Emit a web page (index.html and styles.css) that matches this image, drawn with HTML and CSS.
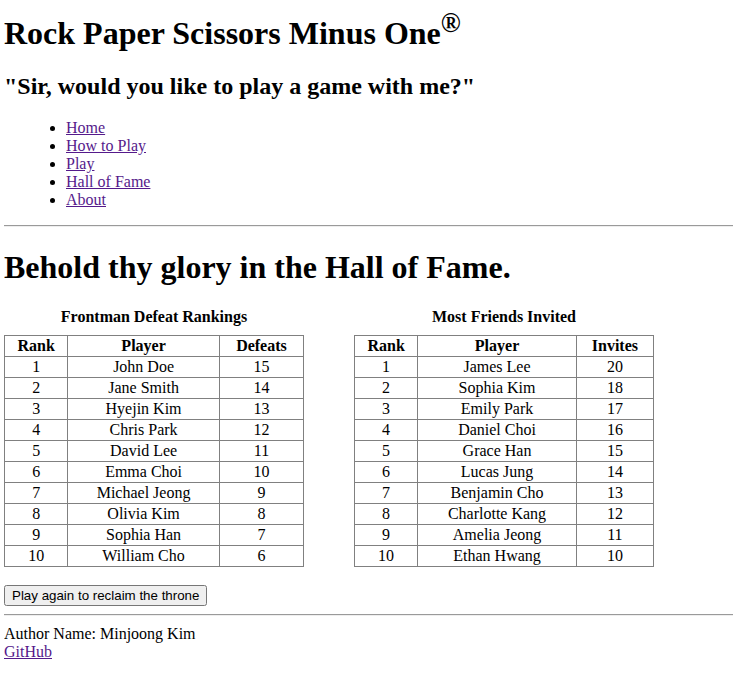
FILE: index.html
```html
<!DOCTYPE html>
<html lang="en">
<head>
<meta charset="utf-8">
<title>Hall of Fame - Rock Paper Scissors Minus One</title>
<link rel="stylesheet" href="styles.css">
</head>
<body>
<header class="site-header">
  <h1 class="site-title">Rock Paper Scissors Minus One<sup>®</sup></h1>
  <h2 class="tagline">"Sir, would you like to play a game with me?"</h2>
  <nav class="site-nav">
    <ul class="nav-list">
      <li><a href="#">Home</a></li>
      <li><a href="#">How to Play</a></li>
      <li><a href="#">Play</a></li>
      <li><a href="#">Hall of Fame</a></li>
      <li><a href="#">About</a></li>
    </ul>
  </nav>
</header>
<hr class="rule">
<main class="content">
  <h1 class="page-title">Behold thy glory in the Hall of Fame.</h1>
  <div class="tables">
    <table class="rank-table">
      <caption>Frontman Defeat Rankings</caption>
      <thead><tr><th>Rank</th><th>Player</th><th>Defeats</th></tr></thead>
      <tbody>
        <tr><td>1</td><td>John Doe</td><td>15</td></tr>
        <tr><td>2</td><td>Jane Smith</td><td>14</td></tr>
        <tr><td>3</td><td>Hyejin Kim</td><td>13</td></tr>
        <tr><td>4</td><td>Chris Park</td><td>12</td></tr>
        <tr><td>5</td><td>David Lee</td><td>11</td></tr>
        <tr><td>6</td><td>Emma Choi</td><td>10</td></tr>
        <tr><td>7</td><td>Michael Jeong</td><td>9</td></tr>
        <tr><td>8</td><td>Olivia Kim</td><td>8</td></tr>
        <tr><td>9</td><td>Sophia Han</td><td>7</td></tr>
        <tr><td>10</td><td>William Cho</td><td>6</td></tr>
      </tbody>
    </table>
    <table class="rank-table">
      <caption>Most Friends Invited</caption>
      <thead><tr><th>Rank</th><th>Player</th><th>Invites</th></tr></thead>
      <tbody>
        <tr><td>1</td><td>James Lee</td><td>20</td></tr>
        <tr><td>2</td><td>Sophia Kim</td><td>18</td></tr>
        <tr><td>3</td><td>Emily Park</td><td>17</td></tr>
        <tr><td>4</td><td>Daniel Choi</td><td>16</td></tr>
        <tr><td>5</td><td>Grace Han</td><td>15</td></tr>
        <tr><td>6</td><td>Lucas Jung</td><td>14</td></tr>
        <tr><td>7</td><td>Benjamin Cho</td><td>13</td></tr>
        <tr><td>8</td><td>Charlotte Kang</td><td>12</td></tr>
        <tr><td>9</td><td>Amelia Jeong</td><td>11</td></tr>
        <tr><td>10</td><td>Ethan Hwang</td><td>10</td></tr>
      </tbody>
    </table>
  </div>
  <div class="actions">
    <button type="button" class="replay">Play again to reclaim the throne</button>
  </div>
</main>
<hr class="rule">
<footer class="site-footer">
  <div>Author Name: Minjoong Kim</div>
  <div><a href="#">GitHub</a></div>
</footer>
</body>
</html>
```

FILE: styles.css
```css
html, body {
  font-family: "Liberation Serif", "Times New Roman", serif;
  font-size: 16px;
  color: #000;
  background: #fff;
}
body {
  margin: 0 0 0 4px;
}
a {
  color: #551a8b;
}
.site-title {
  font-size: 32px;
  margin: 0;
  padding-top: 8px;
}
.tagline {
  font-size: 24px;
  margin: 21px 0 19px;
}
.nav-list {
  margin: 16px 0;
  padding-left: 62px;
}
.rule {
  margin: 8px 0;
  border: 0;
  border-top: 1px solid #9a9a9a;
  border-bottom: 1px solid #eee;
}
.page-title {
  font-size: 32px;
  margin: 22px 0 21px;
}
.tables {
  display: flex;
  gap: 50px;
  align-items: flex-start;
}
.rank-table {
  width: 300px;
  border-collapse: collapse;
}
.rank-table caption {
  font-weight: bold;
  padding-top: 1px;
  padding-bottom: 9px;
}
.rank-table th,
.rank-table td {
  border: 1px solid #808080;
  text-align: center;
  padding: 1px;
}
.actions {
  margin-top: 18px;
}
.replay {
  font-family: "Liberation Sans", Arial, sans-serif;
  font-size: 13.333px;
}
.site-footer {
  padding-top: 1px;
}
```
